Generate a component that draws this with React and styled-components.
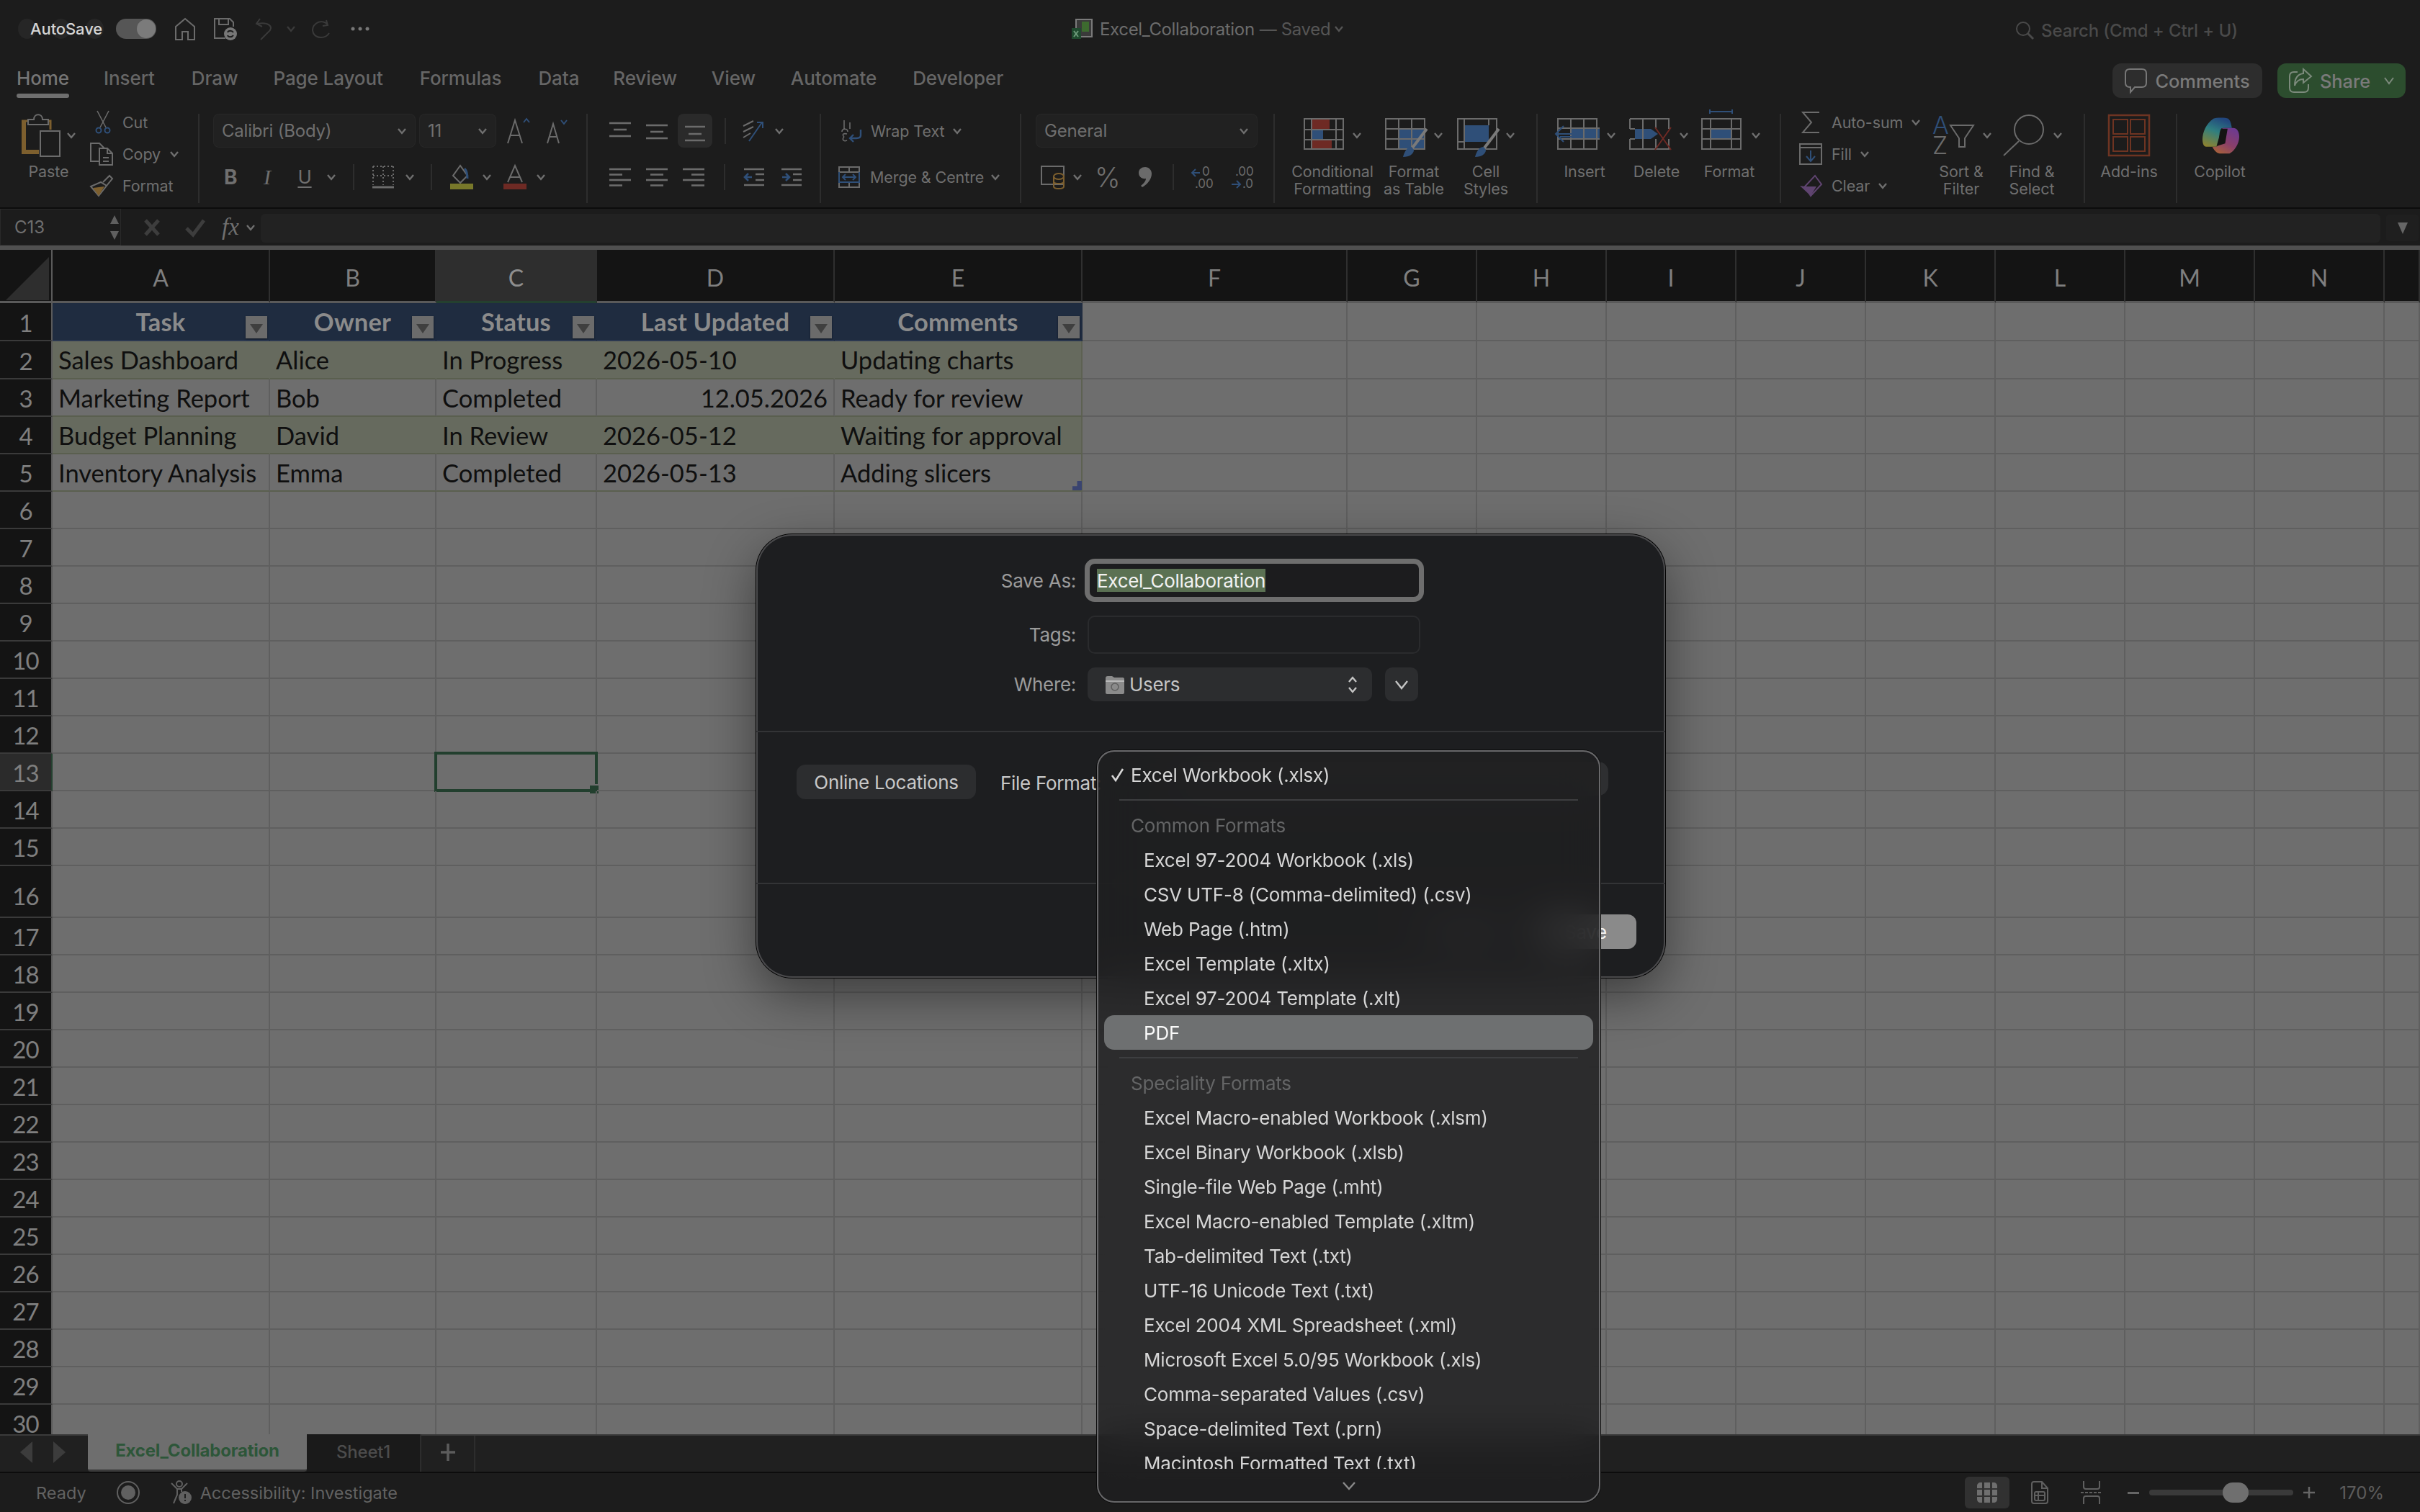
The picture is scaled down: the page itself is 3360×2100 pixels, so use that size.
import React from "react";
import styled, { createGlobalStyle } from "styled-components";

const GlobalStyle = createGlobalStyle`
  html, body { margin: 0; padding: 0; background: #1c1c1c; }
  * { box-sizing: border-box; }
`;

const ink = "#6b6b6b";
const blue = "#2f4f78";
const red = "#6e2a24";
const amber = "#7d5f2e";

const Page = styled.div`
  position: relative;
  width: 3360px;
  height: 2100px;
  overflow: hidden;
  display: flex;
  flex-direction: column;
  background: #1c1c1c;
  font-family: Inter, "Liberation Sans", sans-serif;
  color: #6f6f6f;
`;

const Ico = styled.svg`
  display: block;
  flex: none;
  overflow: visible;
  fill: none;
  stroke: ${ink};
  stroke-width: 2;
  margin-left: ${(p) => p.$ml || 0}px;
`;

function Svg({ w, h, ml, children }) {
  return (
    <Ico width={w} height={h} viewBox={`0 0 ${w} ${h}`} $ml={ml}>
      {children}
    </Ico>
  );
}

const Chev = ({ ml, color = "#6f6f6f", w = 12 }) => (
  <Svg w={w} h={8} ml={ml}>
    <path d={`M1 1 L${w / 2} 7 L${w - 1} 1`} stroke={color} strokeWidth="2.4" />
  </Svg>
);

/* title bar */
const TitleBar = styled.div`
  position: relative;
  height: 80px;
  display: grid;
  grid-template-columns: 1488px 1311px 1fr;
  align-items: center;
`;

const Lights = styled.div`
  position: absolute;
  left: 25px;
  top: 2px;
  display: flex;
  gap: 22px;
`;

const Light = styled.span`
  width: 25px;
  height: 28px;
  border-radius: 50%;
  background: #262626;
`;

const QuickBar = styled.div`
  position: relative;
  display: flex;
  align-items: center;
  padding-left: 42px;
`;

const AutoSave = styled.span`
  position: relative;
  font-size: 22px;
  font-weight: 500;
  letter-spacing: -0.1px;
  color: #d4d4d4;
`;

const Toggle = styled.span`
  width: 56px;
  height: 28px;
  margin-left: 19px;
  border-radius: 14px;
  background: #565656;
  display: flex;
  justify-content: flex-end;
  padding: 1px;
  &::after {
    content: "";
    width: 26px;
    border-radius: 50%;
    background: #7b7b7b;
  }
`;

const DocTitle = styled.div`
  display: flex;
  align-items: center;
  font-size: 24px;
  letter-spacing: -0.35px;
  color: #6c6c6c;
`;

const Search = styled.div`
  display: flex;
  align-items: center;
  gap: 10px;
  padding-top: 4px;
  font-size: 24px;
  font-weight: 500;
  letter-spacing: -0.1px;
  color: #4a4a4a;
`;

/* tab bar */
const TabBar = styled.div`
  height: 68px;
  display: flex;
  align-items: flex-start;
  padding: 8px 20px 0 23px;
`;

const Tab = styled.span`
  position: relative;
  height: 48px;
  margin-right: ${(p) => p.$mr}px;
  display: flex;
  align-items: center;
  padding-bottom: 8px;
  font-size: 26px;
  font-weight: 500;
  letter-spacing: -0.1px;
  white-space: nowrap;
  color: ${(p) => (p.$active ? "#757575" : "#666")};
  &::after {
    content: "";
    display: ${(p) => (p.$active ? "block" : "none")};
    position: absolute;
    left: 0;
    right: 0;
    bottom: 0;
    height: 6px;
    border-radius: 3px;
    background: #6f6f6f;
  }
`;

const TabButton = styled.div`
  height: 48px;
  width: ${(p) => p.$w}px;
  margin-left: ${(p) => p.$ml};
  border-radius: 12px;
  background: ${(p) => p.$bg};
  display: flex;
  align-items: center;
  justify-content: center;
  gap: 11px;
  font-size: 25.5px;
  font-weight: 500;
  letter-spacing: -0.1px;
  color: #7a7a7a;
`;

/* ribbon */
const Ribbon = styled.div`
  height: 140px;
  display: flex;
  font-size: 21.5px;
  letter-spacing: -0.1px;
`;

const Sep = styled.span`
  flex: none;
  width: 2px;
  margin: 10px 0 6px;
  background: #2d2d2d;
`;

const Group = styled.div`
  flex: none;
  width: ${(p) => p.$w}px;
  display: flex;
  flex-direction: ${(p) => (p.$col ? "column" : "row")};
  padding-top: ${(p) => (p.$col ? 10 : 0)}px;
  gap: ${(p) => (p.$col ? 17 : 0)}px;
  padding-left: ${(p) => p.$pl || 0}px;
`;

const Line = styled.div`
  height: 47px;
  display: flex;
  align-items: center;
  white-space: nowrap;
`;

const Label = styled.span`
  margin-left: ${(p) => p.$ml || 0}px;
  margin-right: ${(p) => (p.$push ? "auto" : "0")};
  color: ${(p) => p.$color || "inherit"};
  white-space: nowrap;
`;

const ListCol = styled.div`
  flex: none;
  width: ${(p) => p.$w}px;
  padding-left: ${(p) => p.$pl}px;
  display: flex;
  flex-direction: column;
`;

const ListRow = styled.div`
  height: 44px;
  display: flex;
  align-items: center;
  white-space: nowrap;
`;

const IconSlot = styled.span`
  flex: none;
  width: 45px;
  display: flex;
  align-items: center;
  padding-left: ${(p) => p.$pl || 0}px;
`;

const Tile = styled.div`
  flex: none;
  width: ${(p) => p.$w}px;
  margin-left: ${(p) => p.$ml || 0}px;
  padding-top: 10px;
  display: flex;
  flex-direction: column;
  align-items: center;
  text-align: center;
  line-height: 24px;
  white-space: nowrap;
`;

const TileIcons = styled.div`
  height: 60px;
  margin-bottom: 8px;
  padding-left: ${(p) => p.$pl || 0}px;
  display: flex;
  align-items: center;
  justify-content: center;
  gap: ${(p) => p.$gap || 12}px;
`;

const Select = styled.div`
  flex: none;
  width: ${(p) => p.$w}px;
  height: 47px;
  margin-left: ${(p) => p.$ml || 0}px;
  padding: 0 13px 0 12px;
  display: flex;
  align-items: center;
  justify-content: space-between;
  border-radius: 8px;
  background: #212121;
  box-shadow: inset 0 0 0 1px #272727;
  font-size: 24px;
  letter-spacing: -0.2px;
`;

const ToolBtn = styled.span`
  flex: none;
  width: 48px;
  height: 47px;
  margin-left: ${(p) => p.$ml || 0}px;
  border-radius: 8px;
  background: #2a2a2a;
  display: flex;
  align-items: center;
  justify-content: center;
`;

const ShortSep = styled.span`
  flex: none;
  width: 2px;
  height: 36px;
  margin-left: ${(p) => p.$ml || 0}px;
  background: #2d2d2d;
`;

const Glyph = styled.span`
  flex: none;
  margin-left: ${(p) => p.$ml || 0}px;
  width: ${(p) => p.$w}px;
  text-align: center;
  line-height: 1;
  font-size: ${(p) => p.$size || 26}px;
  font-weight: ${(p) => p.$weight || 400};
  font-style: ${(p) => (p.$italic ? "italic" : "normal")};
  font-family: ${(p) => (p.$serif ? '"Liberation Serif", serif' : "inherit")};
  text-decoration: ${(p) => (p.$under ? "underline" : "none")};
  text-underline-offset: 4px;
`;

const GrowA = ({ ml, up }) => (
  <Svg w={up ? 32 : 28} h={40} ml={ml}>
    <path d={up ? "M1 37 L11 5 L21 37 M5 26 H17" : "M1 37 L9 10 L17 37 M4 28 H14"} />
    <path d={up ? "M23 8 L27 3 L31 8" : "M20 5 L24 10 L28 5"} stroke={blue} />
  </Svg>
);

const AlignIco = ({ ml, rows, top = 0 }) => (
  <Svg w={30} h={26 + top} ml={ml}>
    {rows.map(([a, b], i) => (
      <path key={i} d={`M${a} ${top + 2 + i * (rows.length === 3 ? 9 : 7.5)} H${b}`} strokeWidth="2.6" />
    ))}
  </Svg>
);

/* formula bar */
const FormulaBar = styled.div`
  height: 59px;
  display: flex;
  align-items: stretch;
  border-top: 2px solid #0c0c0c;
  border-bottom: 6px solid #505050;
`;

const NameBox = styled.div`
  flex: none;
  width: 168px;
  display: flex;
  align-items: center;
  justify-content: space-between;
  padding: 0 2px 0 20px;
  box-shadow: inset 0 0 0 1px #2a2a2a;
  font-size: 24px;
`;

const FxTools = styled.div`
  flex: none;
  width: 194px;
  display: flex;
  align-items: center;
`;

const FormulaInput = styled.div`
  flex: 1;
  margin: 7px 0 4px;
  border-radius: 6px;
  background: #222;
`;

const ExpandBtn = styled.div`
  flex: none;
  width: 45px;
  margin: 8px 2px 6px 8px;
  border-radius: 4px;
  background: #1f1f1f;
  display: flex;
  align-items: center;
  justify-content: center;
`;

/* sheet */
const colWidths = [73, 302, 231, 223, 330, 344, 368, 180, 180, 180, 180, 180, 180, 180, 180, 49];
const colNames = ["A", "B", "C", "D", "E", "F", "G", "H", "I", "J", "K", "L", "M", "N", ""];
const rowHeights = [74, 53, 53, ...Array(13).fill(52), 72, ...Array(14).fill(52)];

const Sheet = styled.div`
  flex: none;
  height: 1645px;
  overflow: hidden;
  display: grid;
  grid-template-columns: ${colWidths.map((w) => `${w}px`).join(" ")};
  grid-template-rows: ${rowHeights.map((h) => `${h}px`).join(" ")};
  background: #6e6e6e;
  font-family: Lato, "Liberation Sans", sans-serif;
`;

const Corner = styled.div`
  background: #141414;
  border-right: 2px solid #5a5a5a;
  border-bottom: 3px solid #5a5a5a;
  padding: 10px 4px 4px 8px;
`;

const ColHead = styled.div`
  display: flex;
  align-items: center;
  justify-content: center;
  padding-top: 6px;
  background: ${(p) => (p.$sel ? "#2e2e2e" : "#141414")};
  border-right: 2px solid ${(p) => (p.$sel ? "#2e2e2e" : "#2f2f2f")};
  border-bottom: 3px solid ${(p) => (p.$sel ? "#24402f" : "#5a5a5a")};
  font-size: 32px;
  color: ${(p) => (p.$sel ? "#8e8e8e" : "#7f7f7f")};
`;

const RowHead = styled.div`
  display: flex;
  align-items: ${(p) => (p.$tall ? "flex-end" : "center")};
  justify-content: center;
  padding-top: ${(p) => (p.$tall ? 0 : 2)}px;
  padding-bottom: ${(p) => (p.$tall ? 9 : 0)}px;
  background: ${(p) => (p.$sel ? "#2b2b2b" : "#141414")};
  border-right: 2px solid ${(p) => (p.$sel ? "#24402f" : "#5a5a5a")};
  border-bottom: 2px solid #3a3a3a;
  font-size: 33px;
  letter-spacing: -1px;
  color: #7f7f7f;
`;

const Cell = styled.div`
  position: relative;
  display: flex;
  align-items: center;
  justify-content: ${(p) => (p.$right ? "flex-end" : "flex-start")};
  padding: 0 8px;
  white-space: nowrap;
  font-size: 34.5px;
  color: #0f0f0f;
  background: ${(p) => p.$bg || "transparent"};
  border-right: 2px solid ${(p) => p.$line || "#5f5f5f"};
  border-bottom: 2px solid ${(p) => p.$under || "#5f5f5f"};
`;

const HeadCell = styled(Cell)`
  justify-content: center;
  font-weight: 700;
  color: #8b8b8b;
  letter-spacing: 0.2px;
  padding-bottom: 1px;
`;

const FilterBtn = styled.span`
  position: absolute;
  right: 2px;
  top: 18px;
  width: 30px;
  height: 31px;
  background: #6b6b6b;
  box-shadow: 0 1px 2px #0f1722;
  display: flex;
  align-items: center;
  justify-content: center;
  &::after {
    content: "";
    margin-top: 3px;
    border-left: 9px solid transparent;
    border-right: 9px solid transparent;
    border-top: 13px solid #3f3f3f;
  }
`;

const TableHandle = styled.span`
  position: absolute;
  right: -1px;
  bottom: 0;
  width: 13px;
  height: 13px;
  background: #3a4470;
  clip-path: polygon(100% 0, 100% 100%, 0 100%, 0 55%, 50% 55%, 50% 0);
`;

const Selection = styled.span`
  position: absolute;
  left: -3px;
  top: -3px;
  right: -3px;
  bottom: -3px;
  border: 4px solid #223f2e;
  &::after {
    content: "";
    position: absolute;
    right: -5px;
    bottom: -6px;
    width: 12px;
    height: 11px;
    background: #223f2e;
    box-shadow: 0 -2px 0 #6e6e6e;
  }
`;

const tableRows = [
  ["Sales Dashboard", "Alice", "In Progress", "2026-05-10", "Updating charts"],
  ["Marketing Report", "Bob", "Completed", "12.05.2026", "Ready for review"],
  ["Budget Planning", "David", "In Review", "2026-05-12", "Waiting for approval"],
  ["Inventory Analysis", "Emma", "Completed", "2026-05-13", "Adding slicers"],
];
const tableHead = ["Task", "Owner", "Status", "Last Updated", "Comments"];

function renderSheet() {
  const cells = [
    <Corner key="corner">
      <Svg w={60} h={60}>
        <path d="M0 60 L60 0 V60 Z" fill="#2e2e2e" stroke="none" />
      </Svg>
    </Corner>,
  ];
  colNames.forEach((n, i) =>
    cells.push(
      <ColHead key={`c${i}`} $sel={n === "C"}>
        {n}
      </ColHead>
    )
  );
  for (let r = 1; r <= 30; r++) {
    cells.push(
      <RowHead key={`r${r}`} $tall={r === 16} $sel={r === 13}>
        {r}
      </RowHead>
    );
    for (let c = 0; c < 15; c++) {
      const key = `${r}-${c}`;
      if (r === 1 && c < 5) {
        cells.push(
          <HeadCell key={key} $bg="#1f2c40" $line="#1f2c40" $under="#2b3850">
            {tableHead[c]}
            <FilterBtn />
          </HeadCell>
        );
      } else if (r >= 2 && r <= 5 && c < 5) {
        const even = r % 2 === 0;
        cells.push(
          <Cell
            key={key}
            $bg={even ? "#666a5e" : undefined}
            $line={c === 4 ? "#5d6152" : even ? "#666a5e" : "#5f5f5f"}
            $under="#5a5f4f"
            $right={r === 3 && c === 3}
          >
            {tableRows[r - 2][c]}
            {r === 5 && c === 4 ? <TableHandle /> : null}
          </Cell>
        );
      } else {
        cells.push(<Cell key={key}>{r === 13 && c === 2 ? <Selection /> : null}</Cell>);
      }
    }
  }
  return cells;
}

/* sheet tabs and status */
const SheetTabs = styled.div`
  flex: none;
  height: 54px;
  display: flex;
  background: #202020;
  border-top: 2px solid #3a3a3a;
  border-bottom: 2px solid #0c0c0c;
`;

const TabNav = styled.div`
  flex: none;
  width: 122px;
  display: flex;
  align-items: center;
  padding: 0 0 4px 28px;
  gap: 29px;
`;

const SheetTab = styled.div`
  flex: none;
  width: ${(p) => p.$w}px;
  display: flex;
  align-items: center;
  justify-content: center;
  padding-bottom: 4px;
  font-size: 24px;
  letter-spacing: -0.2px;
  font-weight: ${(p) => (p.$active ? 700 : 500)};
  color: ${(p) => (p.$active ? "#2d5639" : "#4c4c4c")};
  background: ${(p) => (p.$active ? "#6e6e6e" : "#1a1a1a")};
  margin-top: -2px;
  border-bottom: ${(p) => (p.$active ? "3px solid #3a3a3a" : "none")};
  border-right: ${(p) => (p.$active ? "none" : "2px solid #2d2d2d")};
  border-radius: ${(p) => (p.$active ? "0 0 4px 4px" : "0")};
`;

const AddTab = styled.div`
  flex: none;
  width: 75px;
  display: flex;
  align-items: center;
  justify-content: center;
  padding-bottom: 4px;
  border-right: 2px solid #2d2d2d;
`;

const StatusBar = styled.div`
  flex: 1;
  display: flex;
  align-items: center;
  padding-left: 50px;
  font-size: 23.5px;
  color: #626262;
`;

const ViewBtn = styled.span`
  width: 62px;
  height: 44px;
  margin-left: auto;
  border-radius: 6px;
  background: #313131;
  display: flex;
  align-items: center;
  justify-content: center;
`;

const ZoomTrack = styled.span`
  position: relative;
  width: 200px;
  height: 8px;
  margin-left: 14px;
  border-radius: 4px;
  background: #3a3a3a;
  &::after {
    content: "";
    position: absolute;
    left: 102px;
    top: -10px;
    width: 36px;
    height: 28px;
    border-radius: 14px;
    background: #6f6f6f;
  }
`;

const ZoomValue = styled.span`
  margin-left: 34px;
  margin-right: 50px;
  font-size: 24px;
  color: #5c5c5c;
`;

/* save dialog */
const Dialog = styled.div`
  position: absolute;
  left: 1050px;
  top: 742px;
  width: 1262px;
  height: 616px;
  border-radius: 50px;
  background: #1d1e20;
  box-shadow: 0 0 0 1px #000, inset 0 0 0 2px #4a4a4c, 0 24px 70px rgba(0, 0, 0, 0.45);
  display: flex;
  flex-direction: column;
  font-size: 26px;
  letter-spacing: -0.3px;
`;

const DialogTop = styled.div`
  height: 273px;
  padding: 34px 0 0 0;
  display: grid;
  grid-template-columns: 444px 1fr;
  grid-template-rows: 60px 53px 47px;
  column-gap: 16px;
  row-gap: 19px;
  align-items: center;
`;

const FieldLabel = styled.span`
  text-align: right;
  color: #9b9b9b;
`;

const NameField = styled.div`
  width: 471px;
  height: 60px;
  margin-left: -4px;
  padding-left: 10px;
  display: flex;
  align-items: center;
  border: 7px solid #6e6e6e;
  border-radius: 14px;
  background: #1c1c1e;
`;

const SelectedText = styled.span`
  height: 32px;
  display: flex;
  align-items: center;
  background: #5b7153;
  color: #f2f2f2;
`;

const TagsField = styled.div`
  width: 462px;
  height: 53px;
  border: 2px solid #2a2b2d;
  border-radius: 10px;
`;

const WhereRow = styled.div`
  display: flex;
  gap: 18px;
`;

const DialogSelect = styled.div`
  width: 395px;
  height: 47px;
  padding: 0 20px 0 24px;
  display: flex;
  align-items: center;
  gap: 6px;
  border-radius: 10px;
  background: #2c2d2f;
  color: #c4c4c4;
`;

const DialogChevBtn = styled.div`
  width: 46px;
  height: 47px;
  display: flex;
  align-items: center;
  justify-content: center;
  border-radius: 10px;
  background: #2c2d2f;
`;

const Middle = styled.div`
  height: 213px;
  padding: 41px 79px 0 56px;
  display: flex;
  align-items: flex-start;
  border-top: 2px solid #333436;
  border-bottom: 2px solid #333436;
  color: #c8c8c8;
`;

const PlainBtn = styled.div`
  width: ${(p) => p.$w}px;
  height: ${(p) => p.$h || 48}px;
  margin-top: ${(p) => p.$mt || 0}px;
  display: flex;
  align-items: center;
  justify-content: center;
  border-radius: 12px;
  background: ${(p) => p.$bg || "#2c2d2f"};
  color: ${(p) => p.$color || "#c8c8c8"};
`;

const FormatLabel = styled.span`
  margin: 14px 0 0 34px;
`;

const HiddenSelect = styled.div`
  width: 600px;
  height: 47px;
  margin-left: auto;
  border-radius: 14px;
  background: #2e2f31;
`;

const DialogFooter = styled.div`
  flex: 1;
  padding: 42px 40px 0 0;
  display: flex;
  justify-content: flex-end;
  align-items: flex-start;
  gap: 20px;
`;

/* format menu */
const Menu = styled.div`
  position: absolute;
  left: 1523px;
  top: 1042px;
  width: 699px;
  height: 1045px;
  border-radius: 24px;
  overflow: hidden;
  background: rgba(31, 31, 32, 0.83);
  backdrop-filter: blur(28px);
  box-shadow: 0 0 0 1px #0b0b0b, inset 0 0 0 2px #68686a;
  display: flex;
  flex-direction: column;
  font-size: 26px;
  letter-spacing: -0.2px;
  color: #d6d6d6;
`;

const MenuScroll = styled.div`
  height: 998px;
  padding-top: 10px;
  overflow: hidden;
`;

const MenuItem = styled.div`
  height: 48px;
  margin: 0 10px;
  display: flex;
  align-items: center;
  padding-left: ${(p) => p.$pl}px;
  border-radius: 14px;
  white-space: nowrap;
  background: ${(p) => (p.$hot ? "#6e7071" : "transparent")};
  color: ${(p) => (p.$hot ? "#fafafa" : p.$muted ? "#646566" : "#d6d6d6")};
`;

const MenuRule = styled.div`
  height: 2px;
  margin: 10px 31px;
  background: #3d3e40;
`;

const MenuFoot = styled.div`
  flex: 1;
  display: flex;
  align-items: center;
  justify-content: center;
`;

const commonFormats = [
  "Excel 97-2004 Workbook (.xls)",
  "CSV UTF-8 (Comma-delimited) (.csv)",
  "Web Page (.htm)",
  "Excel Template (.xltx)",
  "Excel 97-2004 Template (.xlt)",
];

const specialFormats = [
  "Excel Macro-enabled Workbook (.xlsm)",
  "Excel Binary Workbook (.xlsb)",
  "Single-file Web Page (.mht)",
  "Excel Macro-enabled Template (.xltm)",
  "Tab-delimited Text (.txt)",
  "UTF-16 Unicode Text (.txt)",
  "Excel 2004 XML Spreadsheet (.xml)",
  "Microsoft Excel 5.0/95 Workbook (.xls)",
  "Comma-separated Values (.csv)",
  "Space-delimited Text (.prn)",
  "Macintosh Formatted Text (.txt)",
];

const tabs = [
  ["Home", 48],
  ["Insert", 51],
  ["Draw", 49],
  ["Page Layout", 51],
  ["Formulas", 51],
  ["Data", 47],
  ["Review", 48],
  ["View", 49],
  ["Automate", 50],
  ["Developer", 0],
];

const gridBox = "M1 1 H55 V43 H1 Z";

function Ribbons() {
  return (
    <Ribbon>
      <Group $w={275}>
        <Tile $w={125}>
          <TileIcons $gap={9}>
            <Svg w={54} h={60} ml={9}>
              <path d="M3 11 V53 H24" stroke={amber} strokeWidth="6" />
              <path d="M0 10 H9 M36 10 H40 V22" stroke={amber} strokeWidth="3" />
              <path d="M9 15 V8 H17 C17 -1 29 -1 29 8 H37 V15 Z" />
              <rect x="26" y="24" width="27" height="35" />
            </Svg>
            <Chev />
          </TileIcons>
          <Label $ml={10}>Paste</Label>
        </Tile>
        <ListCol $w={150} $pl={0}>
          <ListRow>
            <IconSlot $pl={7}>
              <Svg w={22} h={32}>
                <path d="M3 0 L15 23 M19 0 L7 23" strokeWidth="1.6" />
                <circle cx="5" cy="27" r="3.5" stroke={blue} />
                <circle cx="17" cy="27" r="3.5" stroke={blue} />
              </Svg>
            </IconSlot>
            <Label>Cut</Label>
          </ListRow>
          <ListRow>
            <IconSlot>
              <Svg w={32} h={32}>
                <path d="M12 26 H1 V1 H13 L20 8" />
                <path d="M13 8 H24 L31 15 V31 H13 Z M24 8 V15 H31 M18 21 H26 M18 26 H26" />
              </Svg>
            </IconSlot>
            <Label>Copy</Label>
            <Chev ml={13} />
          </ListRow>
          <ListRow>
            <IconSlot>
              <Svg w={32} h={30}>
                <path d="M18 10 L27 1 L31 5 L23 15 M1 16 L15 10 L23 15 L12 29 Z" />
                <path d="M4 18 L20 16 L12 29 Z" fill={amber} stroke="none" />
              </Svg>
            </IconSlot>
            <Label>Format</Label>
          </ListRow>
        </ListCol>
      </Group>
      <Sep />
      <Group $w={537} $col $pl={19}>
        <Line>
          <Select $w={281}>
            Calibri (Body)
            <Chev />
          </Select>
          <Select $w={107} $ml={5}>
            11
            <Chev />
          </Select>
          <GrowA ml={15} up />
          <GrowA ml={23} />
        </Line>
        <Line>
          <Glyph $w={18} $ml={15} $weight={700} $size={28}>B</Glyph>
          <Glyph $w={16} $ml={34} $italic $serif $size={30}>I</Glyph>
          <Glyph $w={20} $ml={34} $under $size={26}>U</Glyph>
          <Chev ml={21} />
          <ShortSep $ml={24} />
          <Svg w={30} h={32} ml={25}>
            <path d="M1 1 H29 M1 1 V27 M29 1 V27 M15 1 V27 M1 14 H29" strokeDasharray="2 3" />
            <path d="M0 30 H30" strokeWidth="3" />
          </Svg>
          <Chev ml={16} />
          <ShortSep $ml={23} />
          <Svg w={32} h={34} ml={25}>
            <path d="M14 1 L4 15 L14 25 L24 15 Z" />
            <path d="M20 5 C24 9 24 15 24 19" stroke={blue} strokeWidth="3" />
            <rect y="26" width="32" height="8" fill="#78782a" stroke="none" />
          </Svg>
          <Chev ml={13} />
          <Svg w={32} h={34} ml={17}>
            <path d="M6 24 L16 1 L26 24 M9 17 H23" />
            <rect y="26" width="32" height="8" fill={red} stroke="none" />
          </Svg>
          <Chev ml={14} />
        </Line>
      </Group>
      <Sep />
      <Group $w={322} $col>
        <Line>
          <AlignIco ml={30} rows={[[0, 30], [6, 24], [0, 30]]} />
          <AlignIco ml={21} top={6} rows={[[0, 30], [6, 24], [0, 30]]} />
          <ToolBtn $ml={14}>
            <Svg w={28} h={28}>
              <path d="M0 8 H28 M5 18 H23 M0 27 H28" strokeWidth="2.6" />
            </Svg>
          </ToolBtn>
          <ShortSep $ml={17} />
          <Svg w={32} h={30} ml={23}>
            <path d="M1 8 L15 1 M1 16 L15 9 M1 24 L11 18" strokeWidth="2" />
            <path d="M9 29 L27 3 M20 3 H28 V11" stroke={blue} />
          </Svg>
          <Chev ml={13} />
        </Line>
        <Line>
          <AlignIco ml={30} rows={[[0, 30], [0, 18], [0, 30], [0, 18]]} />
          <AlignIco ml={21} rows={[[0, 30], [6, 24], [0, 30], [6, 24]]} />
          <AlignIco ml={21} rows={[[0, 30], [12, 30], [0, 30], [12, 30]]} />
          <ShortSep $ml={27} />
          <Svg w={28} h={26} ml={26}>
            <path d="M0 2 H28 M16 9 H28 M16 17 H28 M0 24 H28" strokeWidth="2.6" />
            <path d="M11 13 H1 M6 8 L1 13 L6 18" stroke={blue} strokeWidth="2.6" />
          </Svg>
          <Svg w={28} h={26} ml={24}>
            <path d="M0 2 H28 M16 9 H28 M16 17 H28 M0 24 H28" strokeWidth="2.6" />
            <path d="M1 13 H11 M6 8 L11 13 L6 18" stroke={blue} strokeWidth="2.6" />
          </Svg>
        </Line>
      </Group>
      <Sep />
      <Group $w={276} $col>
        <Line>
          <Svg w={30} h={32} ml={28}>
            <path d="M4 1 V13 M1 17 C1 12 9 12 9 17" strokeWidth="1.6" />
            <path d="M12 4 V13 M4 24 C0 20 4 19 8 20 M4 24 C0 28 4 31 8 29" strokeWidth="1.6" />
            <path d="M27 14 V22 C27 25 24 26 21 26 H12 M17 21 L12 26 L17 31" stroke={blue} strokeWidth="2.4" />
          </Svg>
          <Label $ml={11}>Wrap Text</Label>
          <Chev ml={12} />
        </Line>
        <Line>
          <Svg w={30} h={30} ml={24}>
            <path d="M1 1 H29 V29 H1 Z M1 8 H29 M1 22 H29 M15 1 V8 M15 22 V29" />
            <path d="M1 8 V22 H29 V8" stroke={blue} />
            <path d="M6 15 H24 M10 11 L6 15 L10 19 M20 11 L24 15 L20 19" stroke={blue} />
          </Svg>
          <Label $ml={14}>Merge &amp; Centre</Label>
          <Chev ml={10} />
        </Line>
      </Group>
      <Sep />
      <Group $w={350} $col>
        <Line>
          <Select $w={308} $ml={20}>
            General
            <Chev />
          </Select>
        </Line>
        <Line>
          <Svg w={36} h={32} ml={27}>
            <path d="M1 1 H32 V26 H1 Z" />
            <ellipse cx="25" cy="15" rx="7" ry="4" stroke={amber} fill="#1c1c1c" />
            <path d="M18 15 V29 C18 33 32 33 32 29 V15 M18 22 C18 26 32 26 32 22" stroke={amber} />
          </Svg>
          <Chev ml={9} />
          <Glyph $w={32} $ml={18} $size={38} $weight={300}>%</Glyph>
          <Svg w={18} h={28} ml={29}>
            <path d="M9 0 C14 0 18 4 18 9 C18 17 12 24 5 28 L3 26 C7 23 10 19 10 16 C4 17 0 13 0 8 C0 3 4 0 9 0 Z" fill="#6b6b6b" stroke="none" />
          </Svg>
          <ShortSep $ml={29} />
          <Svg w={30} h={32} ml={24}>
            <path d="M12 10 H2 M6 5 L1 10 L6 15" stroke={blue} />
            <text x="15" y="14" fontSize="17" fill={ink} stroke="none">0</text>
            <text x="5" y="31" fontSize="17" fill={ink} stroke="none">.00</text>
          </Svg>
          <Svg w={30} h={32} ml={26}>
            <text x="5" y="14" fontSize="17" fill={ink} stroke="none">.00</text>
            <path d="M0 26 H11 M7 21 L12 26 L7 31" stroke={blue} />
            <text x="15" y="31" fontSize="17" fill={ink} stroke="none">.0</text>
          </Svg>
        </Line>
      </Group>
      <Sep />
      <Group $w={363}>
        <Tile $w={120} $ml={20}>
          <TileIcons>
            <Svg w={56} h={60}>
              <g transform="translate(0 6)">
                <path d="M11 1 H36 V16 H11 Z M11 30 H39 V43 H11 Z" fill={red} stroke="none" />
                <path d="M11 16 H27 V30 H11 Z" fill={blue} stroke="none" />
                <path d={`${gridBox} M11 1 V43 M45 1 V43 M1 16 H55 M1 30 H55`} />
              </g>
            </Svg>
            <Chev />
          </TileIcons>
          <span>Conditional</span>
          <span>Formatting</span>
        </Tile>
        <Tile $w={106}>
          <TileIcons>
            <Svg w={56} h={60}>
              <g transform="translate(0 6)">
                <path d="M19 15 H55 V43 H19 Z" fill={blue} stroke="none" />
                <path d={`${gridBox} M19 1 V43 M37 1 V43 M1 15 H55 M1 29 H55`} />
              </g>
              <path d="M58 21 L36 50" stroke="#7a7a7a" strokeWidth="4" />
              <path d="M37 46 C31 46 27 52 25 60 C34 60 40 56 40 50 Z" fill={blue} stroke="none" />
            </Svg>
            <Chev />
          </TileIcons>
          <span>Format</span>
          <span>as Table</span>
        </Tile>
        <Tile $w={94}>
          <TileIcons>
            <Svg w={56} h={60}>
              <g transform="translate(0 6)">
                <path d="M10 10 H44 V33 H10 Z" fill={blue} stroke="none" />
                <path d={`${gridBox} M10 1 V43 M44 1 V10 M1 33 H10`} />
              </g>
              <path d="M58 21 L36 50" stroke="#7a7a7a" strokeWidth="4" />
              <path d="M37 46 C31 46 27 52 25 60 C34 60 40 56 40 50 Z" fill={blue} stroke="none" />
            </Svg>
            <Chev />
          </TileIcons>
          <span>Cell</span>
          <span>Styles</span>
        </Tile>
      </Group>
      <Sep />
      <Group $w={336}>
        <Tile $w={130}>
          <TileIcons $gap={10}>
            <Svg w={63} h={60}>
              <g transform="translate(4 6)">
                <path d="M20 14 H59 V29 H20 Z" fill={blue} stroke="none" />
                <path d={`${gridBox} M19 1 V43 M37 1 V43 M1 14 H59 M1 29 H59`} />
              </g>
              <path d="M24 28 H2 M13 17 L2 28 L13 39 M24 32 H8" stroke={blue} />
            </Svg>
            <Chev />
          </TileIcons>
          <span>Insert</span>
        </Tile>
        <Tile $w={70}>
          <TileIcons $pl={6} $gap={12}>
            <Svg w={58} h={60}>
              <g transform="translate(0 6)">
                <path d="M8 15 H30 L40 22 L30 29 H8 Z" fill={blue} stroke="none" />
                <path d="M1 1 H55 V15 M55 29 V43 H1 V29 M1 15 V1 M19 1 V15 M37 1 V15 M19 29 V43 M37 29 V43 M1 15 H8 M1 29 H8 M19 15 V29" />
              </g>
              <path d="M36 19 L58 50 M58 19 L36 50" stroke={red} />
            </Svg>
            <Chev />
          </TileIcons>
          <span>Delete</span>
        </Tile>
        <Tile $w={132}>
          <TileIcons $pl={4} $gap={14}>
            <Svg w={56} h={60}>
              <path d="M12 -3 H43 M12 -6 V0 M43 -6 V0" stroke={blue} />
              <g transform="translate(0 6)">
                <path d="M13 15 H42 V29 H13 Z" fill={blue} stroke="none" />
                <path d={`${gridBox} M13 1 V43 M42 1 V43 M1 15 H55 M1 29 H55`} />
              </g>
            </Svg>
            <Chev />
          </TileIcons>
          <span>Format</span>
        </Tile>
      </Group>
      <Sep />
      <Group $w={420}>
        <ListCol $w={202} $pl={25}>
          <ListRow>
            <IconSlot $pl={4}>
              <Svg w={25} h={30}>
                <path d="M24 1 H1 L13 15 L1 29 H24" />
              </Svg>
            </IconSlot>
            <Label>Auto-sum</Label>
            <Chev ml={12} />
          </ListRow>
          <ListRow>
            <IconSlot>
              <Svg w={32} h={30}>
                <path d="M1 1 H31 V29 H1 Z M1 6 H31" />
                <path d="M16 10 V24 M10 18 L16 25 L22 18" stroke={blue} />
              </Svg>
            </IconSlot>
            <Label>Fill</Label>
            <Chev ml={12} />
          </ListRow>
          <ListRow>
            <IconSlot>
              <Svg w={32} h={30}>
                <path d="M8 16 L22 1 L31 13 L16 29 Z" stroke="#5f4470" />
                <path d="M1 15 L8 16 L16 29 Z M8 16 L24 16 L16 29 Z" fill="#5f4470" stroke="none" />
              </Svg>
            </IconSlot>
            <Label>Clear</Label>
            <Chev ml={12} />
          </ListRow>
        </ListCol>
        <Tile $w={96}>
          <TileIcons $pl={2} $gap={12}>
            <Svg w={57} h={56}>
              <text x="-1" y="26" fontSize="34" fill={blue} stroke="none" fontWeight="300">A</text>
              <text x="-1" y="54" fontSize="34" fill={ink} stroke="none" fontWeight="300">Z</text>
              <path d="M24 14 H56 L44 32 V44 H36 V32 Z" />
            </Svg>
            <Chev />
          </TileIcons>
          <span>Sort &amp;</span>
          <span>Filter</span>
        </Tile>
        <Tile $w={100}>
          <TileIcons $pl={2} $gap={12}>
            <Svg w={58} h={58}>
              <circle cx="36" cy="21" r="20" />
              <path d="M22 37 L1 57" />
            </Svg>
            <Chev />
          </TileIcons>
          <span>Find &amp;</span>
          <span>Select</span>
        </Tile>
      </Group>
      <Sep />
      <Group $w={126}>
        <Tile $w={122}>
          <TileIcons>
            <Svg w={58} h={58}>
              <g stroke="#6e3422">
                <rect x="1" y="1" width="56" height="56" strokeWidth="2.5" />
                <rect x="7" y="7" width="20" height="20" />
                <rect x="31" y="7" width="20" height="20" />
                <rect x="7" y="31" width="20" height="20" />
                <rect x="31" y="31" width="20" height="20" />
              </g>
            </Svg>
          </TileIcons>
          <span>Add-ins</span>
        </Tile>
      </Group>
      <Sep />
      <Tile $w={118}>
        <TileIcons>
          <Svg w={60} h={56}>
            <defs>
              <linearGradient id="cpA" x1="0.6" y1="0" x2="0.2" y2="1">
                <stop offset="0" stopColor="#22467e" />
                <stop offset="0.45" stopColor="#2f7f80" />
                <stop offset="1" stopColor="#8c8230" />
              </linearGradient>
              <linearGradient id="cpB" x1="0.8" y1="0" x2="0.2" y2="1">
                <stop offset="0" stopColor="#6c3a92" />
                <stop offset="0.55" stopColor="#8a3f6a" />
                <stop offset="1" stopColor="#a8613a" />
              </linearGradient>
            </defs>
            <g transform="translate(6 2) scale(0.85 0.93)">
              <path d="M18 3 C22 1 38 1 42 3 C46 6 47 12 48 17 L34 17 C30 17 29 20 28 24 L26 42 C25 45 22 45 20 45 L6 45 C2 45 0 40 0 34 C0 24 6 10 18 3 Z" fill="url(#cpA)" stroke="none" />
              <path d="M34 17 L50 17 C56 17 60 22 60 30 C60 40 52 52 44 55 L28 55 C22 55 18 48 16 45 L22 45 C25 45 26 42 27 39 L30 24 C31 20 32 17 34 17 Z" fill="url(#cpB)" stroke="none" />
              <path d="M31 18 H41 L37 40 L23 44 Z" fill="#141414" stroke="none" />
            </g>
          </Svg>
        </TileIcons>
        <span>Copilot</span>
      </Tile>
    </Ribbon>
  );
}

export default function App() {
  return (
    <Page>
      <GlobalStyle />
      <TitleBar>
        <QuickBar>
          <Lights>
            <Light />
            <Light />
            <Light />
          </Lights>
          <AutoSave>AutoSave</AutoSave>
          <Toggle />
          <Svg w={30} h={32} ml={25}>
            <path d="M2 31 V13 L15 2 L28 13 V31 H19 V20 H11 V31 Z" />
          </Svg>
          <Svg w={32} h={32} ml={25}>
            <path d="M16 29 H1 V2 H22 L27 7 V13 M7 2 V10 H20 V2" />
            <circle cx="23" cy="23" r="9" fill="#777" stroke="none" />
            <path d="M19 21 C20 18 25 18 27 21 M27 25 C25 28 20 28 19 25" stroke="#1c1c1c" />
          </Svg>
          <Svg w={26} h={30} ml={25}>
            <path d="M7 1 L2 8 L10 12 M3 8 C18 5 28 12 18 20 L8 30" stroke="#3a3a3a" />
          </Svg>
          <Chev ml={18} color="#3a3a3a" />
          <Svg w={28} h={28} ml={22}>
            <path d="M21 2 L23 9 L16 10 M23 8 C12 -2 -2 10 3 20 C7 28 20 28 25 20" stroke="#3a3a3a" />
          </Svg>
          <Svg w={26} h={6} ml={27}>
            <circle cx="3" cy="3" r="2.5" fill="#777" stroke="none" />
            <circle cx="13" cy="3" r="2.5" fill="#777" stroke="none" />
            <circle cx="23" cy="3" r="2.5" fill="#777" stroke="none" />
          </Svg>
        </QuickBar>
        <DocTitle>
          <Svg w={30} h={28}>
            <path d="M6 1 H28 V25 H6 Z" fill="#3a3a3a" stroke="#7a7a7a" />
            <path d="M14 4 H24 V18 H14 Z" fill="#3d6a2f" stroke="none" />
            <rect x="0" y="13" width="13" height="15" fill="#1f4a2e" stroke="none" />
            <path d="M3 17 L9 25 M9 17 L3 25" stroke="#6d9a7a" />
          </Svg>
          <Label $ml={9}>Excel_Collaboration</Label>
          <Label $ml={7} $color="#555">— Saved</Label>
          <Chev ml={6} color="#555" />
        </DocTitle>
        <Search>
          <Svg w={25} h={25}>
            <circle cx="10" cy="10" r="9" stroke="#4a4a4a" />
            <path d="M16 16 L24 24" stroke="#4a4a4a" strokeWidth="3" />
          </Svg>
          Search (Cmd + Ctrl + U)
        </Search>
      </TitleBar>

      <TabBar>
        {tabs.map(([name, mr], i) => (
          <Tab key={name} $mr={mr} $active={i === 0}>
            {name}
          </Tab>
        ))}
        <TabButton $w={208} $bg="#2d2d2d" $ml="auto">
          <Svg w={31} h={34}>
            <path d="M7 1 H24 C28 1 30 3 30 7 V20 C30 24 28 26 24 26 H14 L8 33 V26 H7 C3 26 1 24 1 20 V7 C1 3 3 1 7 1 Z" stroke="#777" />
          </Svg>
          Comments
        </TabButton>
        <TabButton $w={178} $bg="#2c4d2e" $ml="21px">
          <Svg w={32} h={34}>
            <path d="M12 5 H7 C3 5 1 7 1 11 V27 C1 31 3 33 7 33 H21 C25 33 27 31 27 27 V22" stroke="#7c8a7c" />
            <path d="M20 1 L31 11 L20 20 V15 C14 15 10 18 8 24 C8 14 12 8 20 7 Z" stroke="#7c8a7c" />
          </Svg>
          Share
          <Svg w={14} h={10} ml={8}>
            <path d="M1 1 L7 9 L13 1" stroke="#7c8a7c" />
          </Svg>
        </TabButton>
      </TabBar>

      <Ribbons />

      <FormulaBar>
        <NameBox>
          C13
          <Svg w={14} h={40}>
            <path d="M7 3 L13 15 H1 Z M1 25 H13 L7 37 Z" fill="#5f5f5f" stroke="none" />
          </Svg>
        </NameBox>
        <FxTools>
          <Svg w={22} h={24} ml={32}>
            <path d="M2 2 L20 22 M20 2 L2 22" stroke="#3d3d3d" strokeWidth="5" />
          </Svg>
          <Svg w={28} h={24} ml={35}>
            <path d="M2 13 L11 22 L26 2" stroke="#3d3d3d" strokeWidth="5" />
          </Svg>
          <Glyph $w={30} $ml={20} $size={33} $italic $serif>fx</Glyph>
          <Chev ml={7} />
        </FxTools>
        <FormulaInput />
        <ExpandBtn>
          <Svg w={14} h={18}>
            <path d="M0 1 H14 L7 17 Z" fill="#666" stroke="none" />
          </Svg>
        </ExpandBtn>
      </FormulaBar>

      <Sheet>{renderSheet()}</Sheet>

      <SheetTabs>
        <TabNav>
          <Svg w={17} h={30}>
            <path d="M17 0 V30 L0 15 Z" fill="#3c3c3c" stroke="none" />
          </Svg>
          <Svg w={17} h={30}>
            <path d="M0 0 V30 L17 15 Z" fill="#3c3c3c" stroke="none" />
          </Svg>
        </TabNav>
        <SheetTab $w={304} $active>Excel_Collaboration</SheetTab>
        <SheetTab $w={159}>Sheet1</SheetTab>
        <AddTab>
          <Svg w={20} h={24}>
            <path d="M10 0 V24 M0 12 H20" stroke="#5c5c5c" strokeWidth="3.5" />
          </Svg>
        </AddTab>
      </SheetTabs>

      <StatusBar>
        Ready
        <Svg w={32} h={32} ml={42}>
          <circle cx="16" cy="16" r="15" stroke="#606060" />
          <circle cx="16" cy="16" r="10" fill="#606060" stroke="none" />
        </Svg>
        <Svg w={30} h={34} ml={42}>
          <circle cx="13" cy="5" r="4" stroke="#606060" />
          <path d="M2 4 L10 12 H16 L24 4 M10 12 V20 L5 32 M16 12 V16" stroke="#606060" />
          <circle cx="21" cy="24" r="9" fill="#606060" stroke="none" />
          <path d="M21 19 V25 M21 27 V29" stroke="#1e1e1e" />
        </Svg>
        <Label $ml={12}>Accessibility: Investigate</Label>
        <ViewBtn>
          <Svg w={28} h={28}>
            <path d="M5 0 H7 V8 H0 V5 C0 2 2 0 5 0 Z M10 0 H18 V8 H10 Z M21 0 H23 C26 0 28 2 28 5 V8 H21 Z M0 10 H7 V18 H0 Z M10 10 H18 V18 H10 Z M21 10 H28 V18 H21 Z M0 20 H7 V28 H5 C2 28 0 26 0 23 Z M10 20 H18 V28 H10 Z M21 20 H28 V23 C28 26 26 28 23 28 H21 Z" fill="#6f6f6f" stroke="none" />
          </Svg>
        </ViewBtn>
        <Svg w={24} h={32} ml={30}>
          <path d="M4 1 H15 L23 10 V28 C23 30 22 31 20 31 H4 C2 31 1 30 1 28 V4 C1 2 2 1 4 1 Z M15 1 V10 H23" stroke="#5f5f5f" />
          <rect x="5" y="15" width="14" height="12" rx="2" stroke="#5f5f5f" />
          <path d="M5 20 H19 M10 15 V27" stroke="#5f5f5f" />
        </Svg>
        <Svg w={30} h={32} ml={45}>
          <path d="M4 0 V8 C4 10 5 11 7 11 H23 C25 11 26 10 26 8 V0 M4 32 V24 C4 22 5 21 7 21 H23 C25 21 26 22 26 24 V32" stroke="#5f5f5f" />
          <path d="M0 16 H30" stroke="#5f5f5f" strokeDasharray="4 2" />
        </Svg>
        <Svg w={16} h={3} ml={35}>
          <path d="M0 1.5 H16" stroke="#666" strokeWidth="3" />
        </Svg>
        <ZoomTrack />
        <Svg w={16} h={16} ml={14}>
          <path d="M0 8 H16 M8 0 V16" stroke="#666" strokeWidth="2.5" />
        </Svg>
        <ZoomValue>170%</ZoomValue>
      </StatusBar>

      <Dialog>
        <DialogTop>
          <FieldLabel>Save As:</FieldLabel>
          <NameField>
            <SelectedText>Excel_Collaboration</SelectedText>
          </NameField>
          <FieldLabel>Tags:</FieldLabel>
          <TagsField />
          <FieldLabel>Where:</FieldLabel>
          <WhereRow>
            <DialogSelect>
              <Svg w={28} h={28}>
                <path d="M1 5 C1 3 2 2 4 2 H10 L13 4 H25 C26 4 27 5 27 6 V25 C27 26 26 27 25 27 H3 C2 27 1 26 1 25 Z" fill="#8b8b8b" stroke="none" />
                <path d="M1 9 H27" stroke="#c9c9c9" strokeWidth="1.5" />
                <circle cx="14" cy="17" r="5" stroke="#5f5f5f" strokeWidth="1.5" />
              </Svg>
              <Label $push>Users</Label>
              <Svg w={14} h={26}>
                <path d="M2 9 L7 3 L12 9 M2 17 L7 23 L12 17" stroke="#c4c4c4" strokeWidth="2.4" />
              </Svg>
            </DialogSelect>
            <DialogChevBtn>
              <Svg w={20} h={12}>
                <path d="M2 1 L10 11 L18 1" stroke="#c4c4c4" strokeWidth="2.4" />
              </Svg>
            </DialogChevBtn>
          </WhereRow>
        </DialogTop>
        <Middle>
          <PlainBtn $w={249} $mt={4}>Online Locations</PlainBtn>
          <FormatLabel>File Format:</FormatLabel>
          <HiddenSelect />
        </Middle>
        <DialogFooter>
          <PlainBtn $w={150}>Cancel</PlainBtn>
          <PlainBtn $w={141} $bg="#8a8a8a" $color="#f2f2f2">Save</PlainBtn>
        </DialogFooter>
      </Dialog>

      <Menu>
        <MenuScroll>
          <MenuItem $pl={8}>
            <Svg w={22} h={22}>
              <path d="M3 12 L8 19 L18 3" stroke="#d6d6d6" strokeWidth="2.6" />
            </Svg>
            <Label $ml={7}>Excel Workbook (.xlsx)</Label>
          </MenuItem>
          <MenuRule />
          <MenuItem $pl={37} $muted>Common Formats</MenuItem>
          {commonFormats.map((f) => (
            <MenuItem key={f} $pl={55}>{f}</MenuItem>
          ))}
          <MenuItem $pl={55} $hot>PDF</MenuItem>
          <MenuRule />
          <MenuItem $pl={37} $muted>Speciality Formats</MenuItem>
          {specialFormats.map((f) => (
            <MenuItem key={f} $pl={55}>{f}</MenuItem>
          ))}
        </MenuScroll>
        <MenuFoot>
          <Svg w={20} h={12}>
            <path d="M2 1 L10 10 L18 1" stroke="#8a8a8a" strokeWidth="2.4" />
          </Svg>
        </MenuFoot>
      </Menu>
    </Page>
  );
}
